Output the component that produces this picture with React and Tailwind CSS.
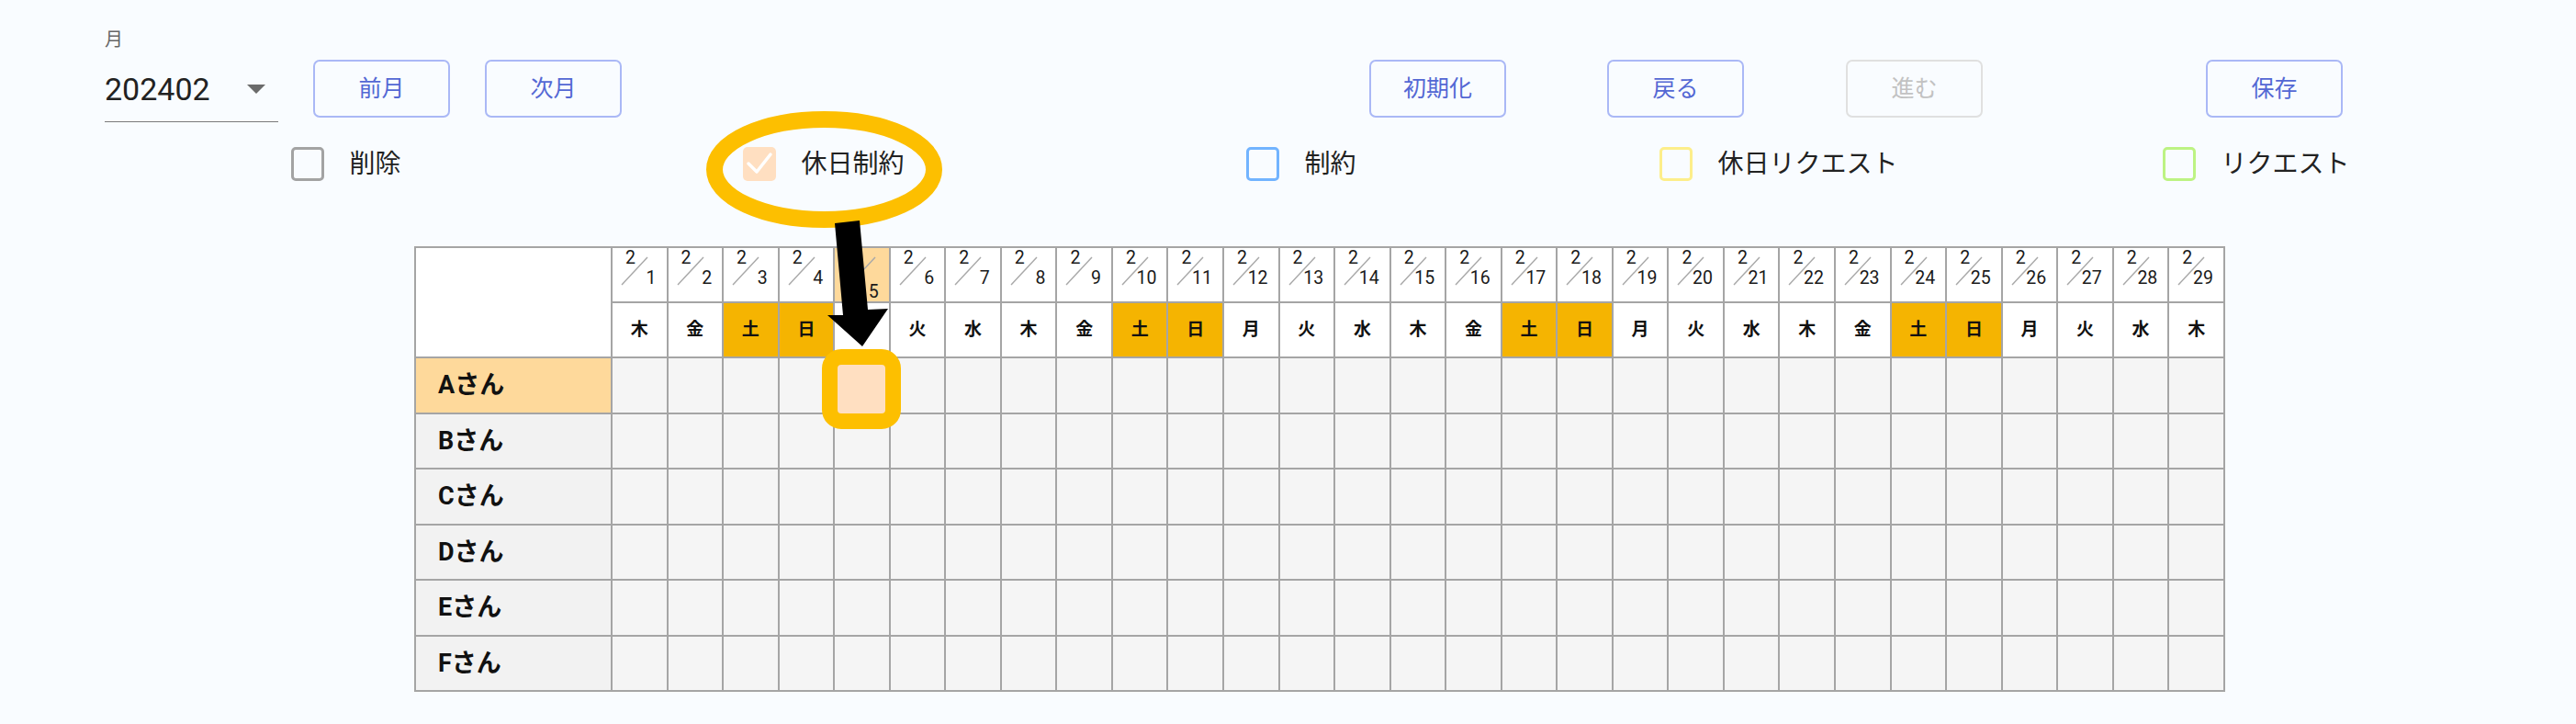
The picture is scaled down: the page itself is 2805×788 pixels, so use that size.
import React from 'react';

const WEEK = ['日', '月', '火', '水', '木', '金', '土'];
const DAYS = Array.from({ length: 29 }, (_, i) => i + 1);
const STAFF = ['A', 'B', 'C', 'D', 'E', 'F'];

function OutlineButton({ children, disabled }) {
  return (
    <button
      className={`w-[149px] h-[63px] rounded-[7px] border-2 bg-transparent text-[25px] leading-none
        ${disabled ? 'border-[#e0e0e0] text-[#c2c2c2]' : 'border-[#aab8f6] text-[#5468d4]'}`}
    >
      {children}
    </button>
  );
}

function Legend({ label, color, checked }) {
  return (
    <div className="flex items-center justify-center gap-[27px]">
      {checked ? (
        <div className="w-[36px] h-[37px] rounded-[5px] bg-[#ffdfc1] flex items-center justify-center">
          <svg width="36" height="37" viewBox="0 0 36 37">
            <polyline points="6,18 15,27 30,8" fill="none" stroke="#ffffff" strokeWidth="3.5" strokeLinecap="round" strokeLinejoin="round" />
          </svg>
        </div>
      ) : (
        <div className={`w-[36px] h-[37px] rounded-[5px] border-[3.5px] ${color}`} />
      )}
      <span className="text-[28px] leading-[37px] text-[#222]">{label}</span>
    </div>
  );
}

function DateCell({ d }) {
  const highlighted = d === 5;
  return (
    <th className={`relative p-0 align-top border-2 border-[#a5a5a5] font-normal ${highlighted ? 'bg-[#fed99b]' : 'bg-white'}`}>
      <svg className="absolute left-0 top-0" width="60" height="58" viewBox="0 0 60 58">
        {highlighted ? (
          <line x1="16" y1="40" x2="44" y2="10" stroke="#a8a8a8" strokeWidth="1.4" />
        ) : (
          <line x1="10" y1="40" x2="38" y2="10" stroke="#a8a8a8" strokeWidth="1.4" />
        )}
      </svg>
      <div className="relative flex flex-col pt-[1px] text-[19.5px] leading-[20px] text-[#1a1a1a]">
        <span className="pl-[14px] text-left">2</span>
        <span className={`pr-[11px] text-right ${highlighted ? 'mt-[17px]' : 'mt-[2px]'}`}>{d}</span>
      </div>
    </th>
  );
}

export default function App() {
  return (
    <div
      className="relative w-[2805px] h-[788px] bg-[#f9fcff] overflow-hidden"
      style={{ fontFamily: 'Roboto, "Noto Sans CJK JP", sans-serif' }}
    >
      {/* top controls */}
      <div className="flex items-start pl-[114px] pt-[31px]">
        <div className="w-[189px] border-b border-[#7a7a7a] pb-[15px]">
          <div className="text-[20px] leading-[24px] text-[#666]">月</div>
          <div className="flex items-center justify-between mt-[22px] h-[40px] pr-[14px]">
            <span className="text-[34px] leading-[40px] text-[#222]">202402</span>
            <svg width="20" height="11" viewBox="0 0 20 11">
              <polygon points="0,0 20,0 10,10" fill="#6b6b6b" />
            </svg>
          </div>
        </div>
        <div className="flex gap-[38px] ml-[38px] mt-[34px]">
          <OutlineButton>前月</OutlineButton>
          <OutlineButton>次月</OutlineButton>
        </div>
        <div className="flex ml-[814px] mt-[34px]">
          <OutlineButton>初期化</OutlineButton>
          <div className="ml-[110px]">
            <OutlineButton>戻る</OutlineButton>
          </div>
          <div className="ml-[111px]">
            <OutlineButton disabled>進む</OutlineButton>
          </div>
          <div className="ml-[243px]">
            <OutlineButton>保存</OutlineButton>
          </div>
        </div>
      </div>

      {/* legend */}
      <div className="grid grid-cols-5 w-[2600px] ml-[117px] mt-[27px]">
        <Legend label="削除" color="border-[#a3a3a3]" />
        <Legend label="休日制約" checked />
        <Legend label="制約" color="border-[#72b4ff]" />
        <Legend label="休日リクエスト" color="border-[#fdee8a]" />
        <Legend label="リクエスト" color="border-[#bdf383]" />
      </div>

      {/* schedule table */}
      <div className="ml-[451px] mt-[71px]">
        <table className="table-fixed border-collapse w-[1972px]">
          <colgroup>
            <col className="w-[214px]" />
            {DAYS.map((d) => (
              <col key={d} />
            ))}
          </colgroup>
          <thead>
            <tr className="h-[60px]">
              <th rowSpan={2} className="bg-white border-2 border-[#a5a5a5]" />
              {DAYS.map((d) => (
                <DateCell key={d} d={d} />
              ))}
            </tr>
            <tr className="h-[60px]">
              {DAYS.map((d) => {
                const w = (3 + d) % 7;
                const weekend = w === 0 || w === 6;
                return (
                  <th
                    key={d}
                    className={`p-0 border-2 border-[#a5a5a5] text-[19px] font-bold text-[#111] ${weekend ? 'bg-[#f5b401]' : 'bg-white'}`}
                  >
                    {WEEK[w]}
                  </th>
                );
              })}
            </tr>
          </thead>
          <tbody>
            {STAFF.map((s) => (
              <tr key={s} className="h-[60.5px]">
                <td
                  className={`border-2 border-[#a5a5a5] pl-[24px] text-[27px] font-bold text-[#111] ${s === 'A' ? 'bg-[#fed99b]' : 'bg-[#f2f2f2]'}`}
                >
                  {s}さん
                </td>
                {DAYS.map((d) => (
                  <td key={d} className="border-2 border-[#a5a5a5] bg-[#f5f5f5]" />
                ))}
              </tr>
            ))}
          </tbody>
        </table>
      </div>

      {/* annotation: ellipse round the legend item */}
      <svg className="absolute left-[760px] top-[112px]" width="280" height="150" viewBox="0 0 280 150">
        <ellipse cx="137.5" cy="72.5" rx="119.5" ry="54.5" fill="none" stroke="#fdbf00" strokeWidth="18" />
      </svg>

      {/* annotation: highlighted cell */}
      <div className="absolute left-[895px] top-[380px] w-[86px] h-[87px] rounded-[21px] border-[17px] border-[#fdbf00] bg-[#ffdfc1]" />

      {/* annotation: arrow */}
      <svg className="absolute left-[890px] top-[230px]" width="90" height="160" viewBox="0 0 90 160">
        <polygon points="19,13 46,10 55,107 77,106 49,147 11,113 28,113" fill="#000000" />
      </svg>
    </div>
  );
}
